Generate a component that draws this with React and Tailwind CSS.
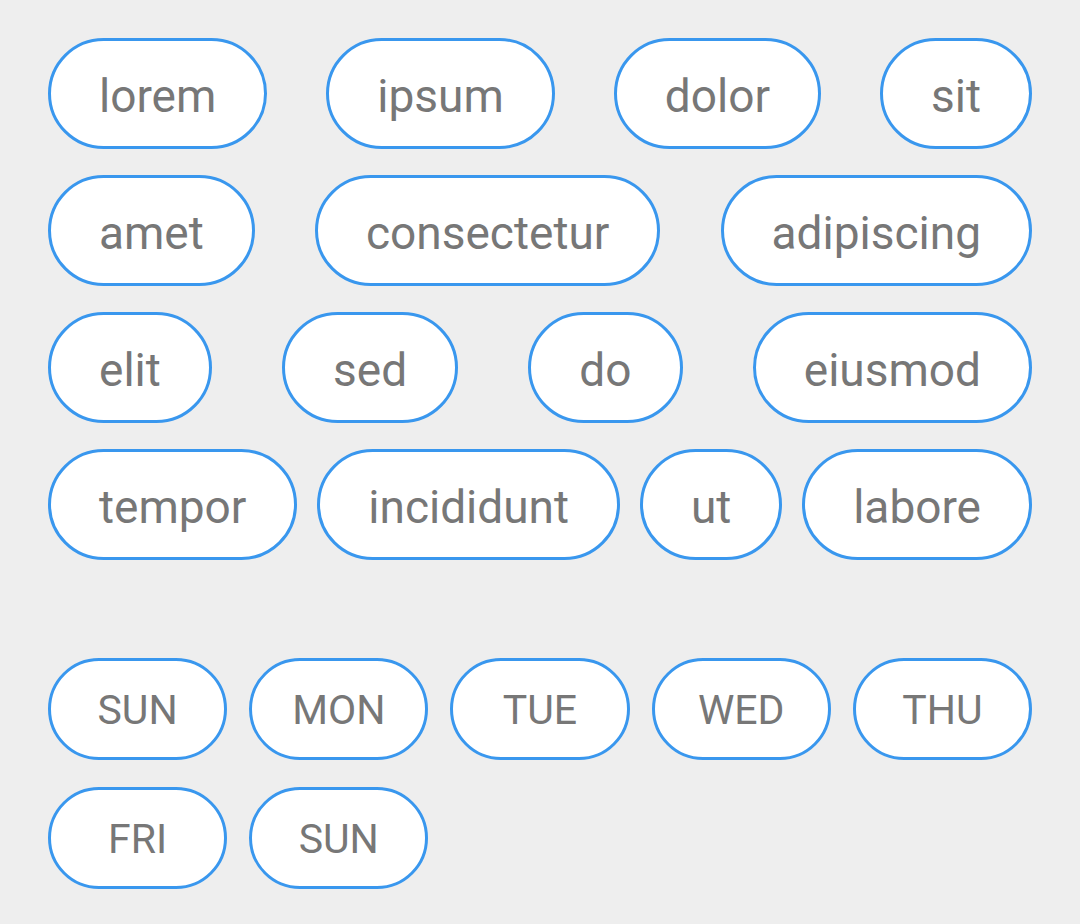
import React from "react";

const rows = [
  ["lorem", "ipsum", "dolor", "sit"],
  ["amet", "consectetur", "adipiscing"],
  ["elit", "sed", "do", "eiusmod"],
  ["tempor", "incididunt", "ut", "labore"],
];

const days = ["SUN", "MON", "TUE", "WED", "THU", "FRI", "SUN"];

function Chip({ label }) {
  return (
    <div className="flex h-[111px] items-center justify-center rounded-full border-[3px] border-[#3997ee] bg-white px-[48px] pt-[4px] text-[46px] leading-none text-[#777777]">
      {label}
    </div>
  );
}

export default function App() {
  return (
    <div
      className="min-h-[924px] w-[1080px] bg-[#eeeeee] px-[48px] pt-[38px]"
      style={{ fontFamily: "Roboto, 'Noto Sans', sans-serif" }}
    >
      <div className="flex flex-col gap-[26px]">
        {rows.map((row, i) => (
          <div key={i} className="flex justify-between">
            {row.map((w) => (
              <Chip key={w} label={w} />
            ))}
          </div>
        ))}
      </div>

      <div className="mt-[98px] grid grid-cols-5 gap-x-[22px] gap-y-[27px]">
        {days.map((d, i) => (
          <div
            key={i}
            className="flex h-[102px] items-center justify-center rounded-full border-[3px] border-[#3997ee] bg-white pt-[2px] text-[41px] leading-none text-[#777777]"
          >
            {d}
          </div>
        ))}
      </div>
    </div>
  );
}
